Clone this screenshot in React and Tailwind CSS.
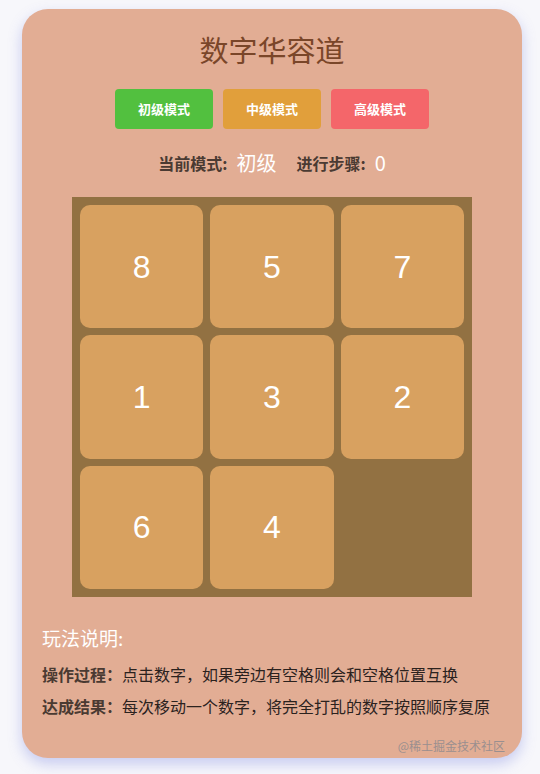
export default function App() {
  const tiles = [8, 5, 7, 1, 3, 2, 6, 4, null];
  const font = { fontFamily: '"PingFang SC","Noto Sans CJK SC","Noto Sans",sans-serif' };
  return (
    <div className="w-[540px] h-[774px] bg-[#f7f7fb] overflow-hidden" style={font}>
      <div className="relative ml-[22px] mt-[9px] w-[500px] h-[749px] rounded-[26px] bg-[#e2ad94] shadow-[0_6px_14px_rgba(110,120,220,0.35)] flex flex-col items-center">
        <h1 className="mt-[22px] text-[29px] leading-[36px] text-[#7a4629]">数字华容道</h1>
        <div className="mt-[22px] flex gap-[10px]">
          <button className="w-[98px] h-[40px] rounded-[4px] bg-[#52c03f] text-white text-[13px] font-bold">初级模式</button>
          <button className="w-[98px] h-[40px] rounded-[4px] bg-[#e19f3b] text-white text-[13px] font-bold">中级模式</button>
          <button className="w-[98px] h-[40px] rounded-[4px] bg-[#f4666a] text-white text-[13px] font-bold">高级模式</button>
        </div>
        <div className="mt-[20px] h-[28px] flex items-center text-[16px] font-bold text-[#4a3a32]">
          <span>当前模式:</span>
          <span className="ml-[9px] text-[20px] font-normal text-white">初级</span>
          <span className="ml-[20px]">进行步骤:</span>
          <span className="ml-[9px] text-[20px] font-normal text-white">0</span>
        </div>
        <div className="mt-[20px] w-[400px] h-[400px] bg-[#927142] p-[8px] grid grid-cols-3 grid-rows-3 gap-[7px]">
          {tiles.map((t, i) =>
            t === null ? (
              <div key={i} />
            ) : (
              <div
                key={i}
                className="rounded-[10px] bg-[#d8a160] flex items-center justify-center text-white text-[32px]"
                style={{ fontFamily: '"Liberation Sans",Arial,sans-serif' }}
              >
                {t}
              </div>
            )
          )}
        </div>
        <div className="self-stretch px-[20px] mt-[28px]">
          <div className="text-[19px] leading-[26px] text-white">玩法说明:</div>
          <div className="mt-[12px] text-[16px] leading-[22px] text-[#2b221e]">
            <span className="font-bold text-[#4a3a32]">操作过程：</span>
            <span>点击数字，如果旁边有空格则会和空格位置互换</span>
          </div>
          <div className="mt-[10px] text-[16px] leading-[22px] text-[#2b221e]">
            <span className="font-bold text-[#4a3a32]">达成结果：</span>
            <span>每次移动一个数字，将完全打乱的数字按照顺序复原</span>
          </div>
        </div>
        <div className="absolute right-[17px] bottom-[3px] text-[12px] text-[#9a8f8f]">@稀土掘金技术社区</div>
      </div>
    </div>
  );
}
